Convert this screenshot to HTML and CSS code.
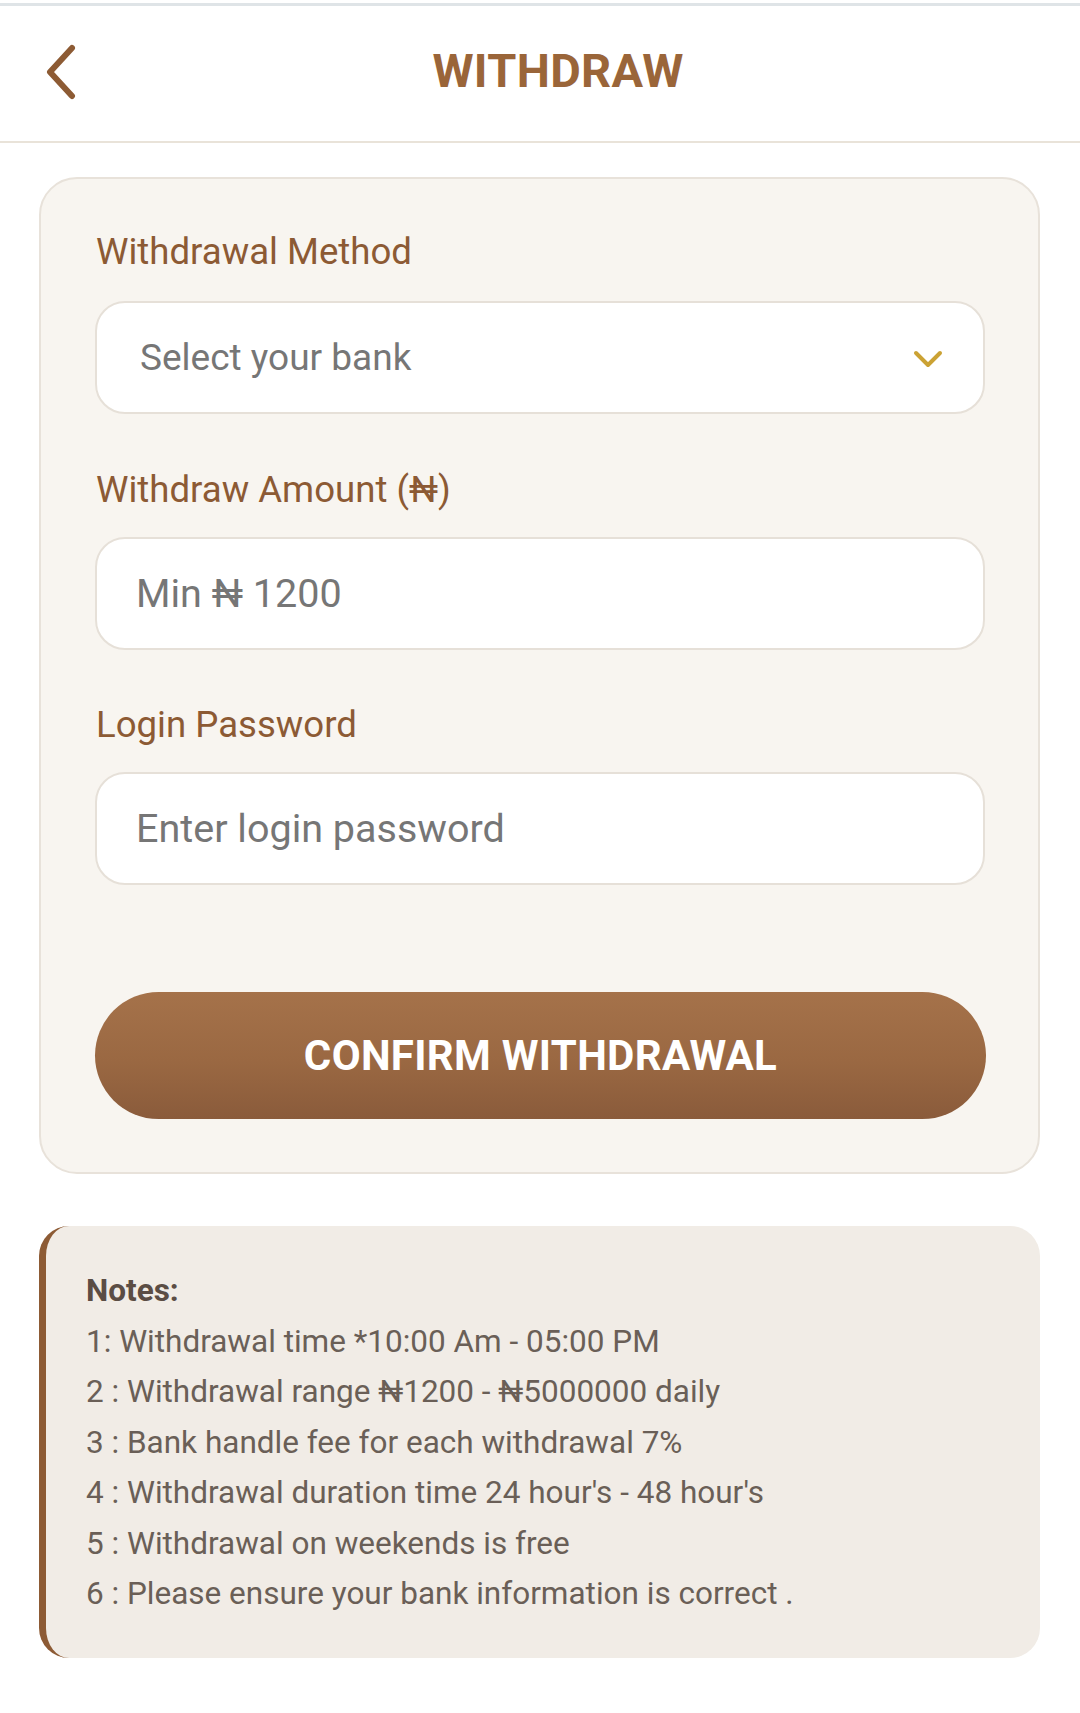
FILE: index.html
```html
<!DOCTYPE html>
<html lang="en">
<head>
<meta charset="utf-8">
<title>Withdraw</title>
<link rel="stylesheet" href="styles.css">
</head>
<body>
<div class="page">
  <header class="topbar">
    <button class="back" aria-label="Back">
      <svg width="34" height="56" viewBox="0 0 34 56"><path d="M28 4 L6 28 L28 52" fill="none" stroke="#8d5b34" stroke-width="6" stroke-linecap="round" stroke-linejoin="round"/></svg>
    </button>
    <h1 class="title">WITHDRAW</h1>
  </header>

  <main class="content">
    <section class="card">
      <label class="field-label">Withdrawal Method</label>
      <div class="select">
        <span class="select-text">Select your bank</span>
        <svg class="select-arrow" width="30" height="18" viewBox="0 0 30 18"><path d="M3 3 L15 15 L27 3" fill="none" stroke="#cba234" stroke-width="4" stroke-linecap="round" stroke-linejoin="round"/></svg>
      </div>

      <label class="field-label field-label-tight">Withdraw Amount (₦)</label>
      <input class="input" type="text" placeholder="Min ₦ 1200">

      <label class="field-label field-label-tight">Login Password</label>
      <input class="input" type="password" placeholder="Enter login password">

      <button class="confirm">CONFIRM WITHDRAWAL</button>
    </section>

    <section class="notes">
      <p class="notes-title">Notes:</p>
      <p class="note">1: Withdrawal time *10:00 Am - 05:00 PM</p>
      <p class="note">2 : Withdrawal range ₦1200 - ₦5000000 daily</p>
      <p class="note">3 : Bank handle fee for each withdrawal 7%</p>
      <p class="note">4 : Withdrawal duration time 24 hour's - 48 hour's</p>
      <p class="note">5 : Withdrawal on weekends is free</p>
      <p class="note">6 : Please ensure your bank information is correct .</p>
    </section>
  </main>
</div>
</body>
</html>
```

FILE: styles.css
```css
* {
  box-sizing: border-box;
}

html, body {
  margin: 0;
  padding: 0;
  background: #ffffff;
}

body {
  font-family: Roboto, "Noto Sans", "DejaVu Sans", sans-serif;
  width: 1080px;
  min-height: 1713px;
}

.page {
  padding-top: 3px;
}

.topbar {
  display: flex;
  align-items: center;
  height: 140px;
  border-top: 3px solid #dfe4e7;
  border-bottom: 2px solid #e9e3d9;
  background: #ffffff;
}

.back {
  width: 80px;
  height: 60px;
  padding: 0 0 0 44px;
  margin: 0;
  border: 0;
  background: transparent;
  display: flex;
  align-items: center;
  justify-content: flex-start;
  margin-top: -4px;
}

.title {
  flex: 1;
  margin: 0;
  padding-right: 44px;
  text-align: center;
  font-size: 47px;
  font-weight: 700;
  color: #9a6539;
  letter-spacing: 0.3px;
  margin-top: -6px;
}

.content {
  padding: 34px 40px 40px 39px;
}

.card {
  width: 1001px;
  background: #f8f5f0;
  border: 2px solid #e8e2da;
  border-radius: 38px;
  padding: 51px 54px 53px 54px;
  display: flex;
  flex-direction: column;
}

.field-label {
  display: block;
  font-size: 36.6px;
  line-height: 44px;
  color: #8c5a34;
  margin: 0 0 27px 1px;
}

.field-label-tight {
  margin-bottom: 25px;
}

.select,
.input {
  width: 890px;
  height: 113px;
  background: #ffffff;
  border: 2px solid #e6e0d8;
  border-radius: 30px;
  font-family: Roboto, "Noto Sans", "DejaVu Sans", sans-serif;
  color: #333333;
}

.select {
  display: flex;
  align-items: center;
  justify-content: space-between;
  padding: 0 40px 0 43px;
  margin-bottom: 54px;
  font-size: 37px;
}

.select-text {
  color: #767676;
}

.select-arrow {
  margin-top: 2px;
}

.input {
  display: block;
  padding: 0 40px 0 39px;
  margin: 0 0 53px 0;
  outline: none;
  font-size: 39.5px;
}

.input::placeholder {
  color: #767676;
  opacity: 1;
}

.confirm {
  margin-top: 54px;
  width: 891px;
  height: 127px;
  border: 0;
  border-radius: 64px;
  background: linear-gradient(180deg, #a5724a 0%, #9a6842 55%, #8a5b3b 100%);
  color: #ffffff;
  font-family: Roboto, "Noto Sans", "DejaVu Sans", sans-serif;
  font-size: 42px;
  font-weight: 700;
  letter-spacing: 0.3px;
  padding: 0;
}

.notes {
  margin-top: 52px;
  width: 1001px;
  background: #f1ece6;
  border-left: 7px solid #8d5b35;
  border-radius: 30px;
  padding: 40px 30px 38px 40px;
}

.notes p {
  margin: 0;
  font-size: 31.5px;
  line-height: 50.5px;
  color: #6a5f57;
}

.notes .notes-title {
  font-weight: 700;
  color: #5b4d44;
}
```
